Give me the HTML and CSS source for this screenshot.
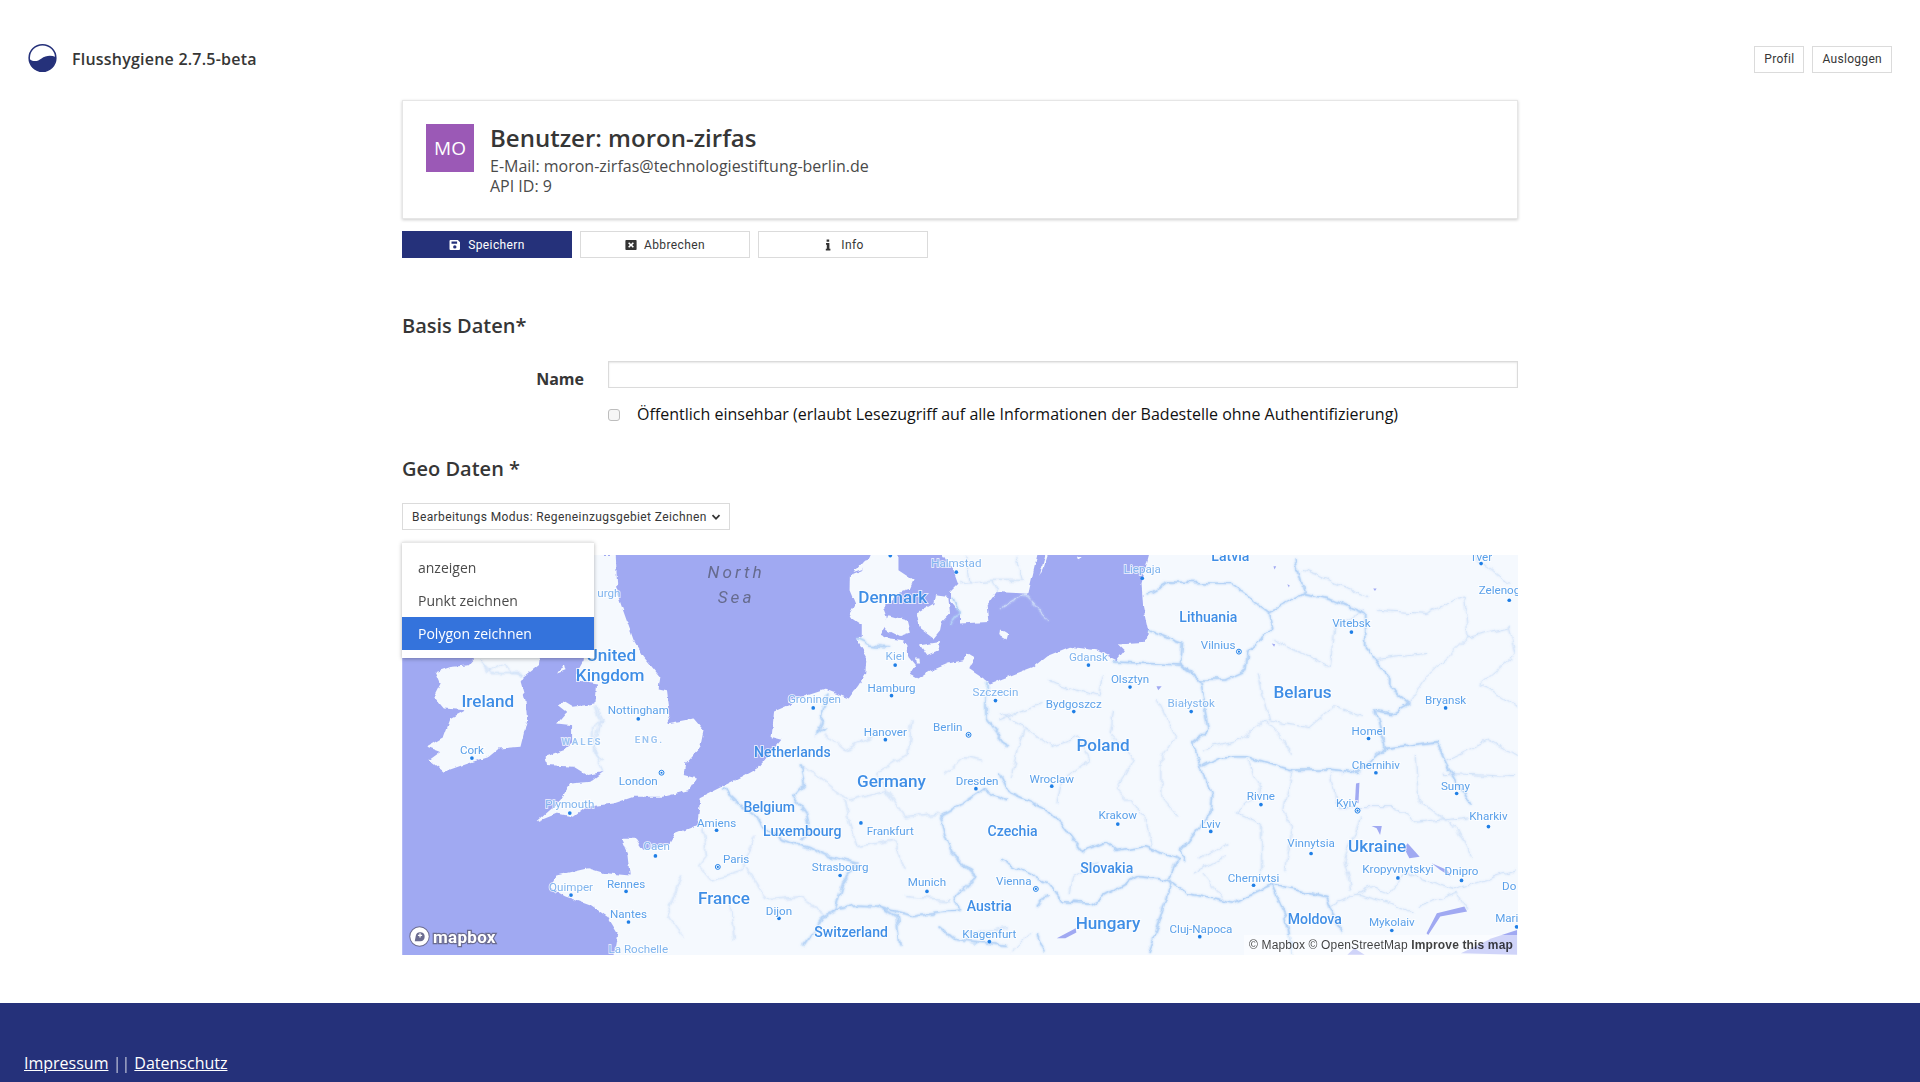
FILE: index.html
```html
<!DOCTYPE html>
<html lang="de">
<head>
	<meta charset="UTF-8">
	<title>Flusshygiene</title>
	<link rel="stylesheet" href="styles.css">
</head>
<body>
	<header class="top">
		<a class="brand" href="#">
			<svg class="brand-logo" viewBox="0 0 30 30">
				<circle cx="15" cy="15" r="13.8" fill="#fff" stroke="#25317a" stroke-width="1.6"/>
				<path d="M1.5 16 C6 19.5 10 18.5 14 15.5 C18 12.5 24 12 28.5 14 C29 22 23 29 15 29 C7 29 1.5 23 1.5 16 Z" fill="#25317a"/>
			</svg>
			<span>Flusshygiene 2.7.5-beta</span>
		</a>
		<nav class="top-nav">
			<a class="btn btn-small" href="#">Profil</a>
			<a class="btn btn-small" href="#">Ausloggen</a>
		</nav>
	</header>

	<main class="content">
		<section class="card">
			<div class="avatar">MO</div>
			<div class="card-text">
				<h1>Benutzer: moron-zirfas</h1>
				<p>E-Mail: moron-zirfas@technologiestiftung-berlin.de</p>
				<p>API ID: 9</p>
			</div>
		</section>

		<div class="actions">
			<a class="btn btn-wide btn-primary" href="#">
				<svg class="icon" viewBox="0 0 12 12"><path fill="currentColor" fill-rule="evenodd" d="M1.5 1h7.3L11 3.2v6.8a1 1 0 0 1-1 1H1.5a1 1 0 0 1-1-1V2a1 1 0 0 1 1-1zM2.5 2.4v2.4h5.6V2.4zM5.8 6.2a1.7 1.7 0 1 0 0 3.4 1.7 1.7 0 0 0 0-3.4z"/></svg>
				Speichern
			</a>
			<a class="btn btn-wide" href="#">
				<svg class="icon" viewBox="0 0 12 12"><path fill="#333" fill-rule="evenodd" d="M1.2 1h9.6a.8.8 0 0 1 .8.8v8.4a.8.8 0 0 1-.8.8H1.2a.8.8 0 0 1-.8-.8V1.800a.8.8 0 0 1 .8-.8zM4.200 3.200 3.100 4.300 4.800 6 3.100 7.700l1.100 1.100L6 7.100l1.800 1.700 1.100-1.100L7.200 6l1.700-1.700-1.100-1.100L6 4.900z"/></svg>
				Abbrechen
			</a>
			<a class="btn btn-wide" href="#">
				<svg class="icon" viewBox="0 0 12 12"><path fill="#333" d="M4.600 0.500h2.600v2.200H4.600zM4 4h3.400v5.700h1V11.500H3.800V9.700h1V5.700H4z"/></svg>
				Info
			</a>
		</div>

		<h2 class="section-title first">Basis Daten*</h2>
		<div class="form-row">
			<label class="form-label" for="name">Name</label>
			<input class="form-input" id="name" type="text">
		</div>
		<div class="check-row">
			<input class="check" id="public" type="checkbox">
			<label for="public">Öffentlich einsehbar (erlaubt Lesezugriff auf alle Informationen der Badestelle ohne Authentifizierung)</label>
		</div>

		<h2 class="section-title second">Geo Daten *</h2>

		<div class="geo">
			<div class="mode-select">
				Bearbeitungs Modus: Regeneinzugsgebiet Zeichnen
				<svg class="chevron" viewBox="0 0 10 10"><path d="M1.500 3.200 5 6.800 8.500 3.200" fill="none" stroke="#333" stroke-width="1.800"/></svg>
			</div>

			<ul class="mode-menu">
				<li>anzeigen</li>
				<li>Punkt zeichnen</li>
				<li class="active">Polygon zeichnen</li>
			</ul>

			<div class="map">
				<svg class="map-svg" viewBox="328 453 912 327">
					<defs>
						<filter id="rough" filterUnits="userSpaceOnUse" x="320" y="440" width="930" height="350">
							<feTurbulence type="fractalNoise" baseFrequency=".18" numOctaves="2" seed="4"/>
							<feDisplacementMap in="SourceGraphic" scale="3.500" xChannelSelector="R" yChannelSelector="G"/>
						</filter>
						<filter id="wiggle" filterUnits="userSpaceOnUse" x="320" y="440" width="930" height="350">
							<feTurbulence type="fractalNoise" baseFrequency=".09" numOctaves="3" seed="9" result="noise"/>
							<feDisplacementMap in="SourceGraphic" in2="noise" scale="7" xChannelSelector="R" yChannelSelector="G" result="line"/>
							<feGaussianBlur in="line" stdDeviation="1" result="glow"/>
							<feMerge>
								<feMergeNode in="glow"/>
								<feMergeNode in="line"/>
							</feMerge>
						</filter>
					</defs>

					<rect x="328" y="453" width="912" height="327" class="water"/>

					<!-- land -->
					<g filter="url(#rough)">
						<path class="land" d="M499 790 504 762 496 749 483 740 461 732 449 725 454 715 480 709 493 713 514 715 512 697 507 685 519 685 525 694 545 691 551 681 569 674 572 651 590 642 606 634 619 627 638 604 630 602 632 581 648 574 643 573 674 563 693 570.300 701 559.500 706.500 550 707.800 536 703.700 529.500 699 521.300 703.700 520 703.700 510.400 695.600 505 693.700 501 698.300 492.800 693.700 481.900 694 469.600 703.700 465.500 709 457.400 714.600 445 733.700 445 733.700 465.500 746 473.700 743 480.500 735 483 728 490 721.400 496.800 724 503.600 721.400 514.500 718.700 517.200 726.900 521.300 737.700 522.700 741 526.800 741.800 536.300 747.300 543.100 743 550 750 554 758 548.600 774.500 541.700 786.700 539 789.500 533.600 796.300 537.700 790.800 545.800 803 554 808.500 558 843.900 544.500 854.800 535.800 873.900 528.100 895.600 530.900 912 539 918.800 530.900 913.300 525.400 936.500 524 937.800 514.500 933.700 495.500 932.400 476.400 940.500 445 1250 445 1250 790Z"/>
						<g transform="matrix(.2722 0 0 .2722 669.700 449.200)">
							<path class="land" d="M345 -20 400 60 415 100 390 125 390 150 420 185 420 220 505 215 500 165 530 125 625 130 660 -20Z"/>
							<path class="land" d="M672 50 695 -20 685 -20 658 80Z"/>
							<path class="land" d="M205 195 260 210 270 250 240 260 200 240 188 225Z"/>
							<path class="land" d="M290 190 340 160 345 135 385 140 390 190 365 215 360 240 340 265 300 235Z"/>
							<path class="land" d="M300 285 360 275 355 300 320 315Z"/>
							<path class="land" d="M540 235 565 250 560 268 538 255Z"/>
							<path class="land" d="M770 20 785 20 775 33Z"/>
							<path class="land" d="M285 325 298 325 300 337 287 337Z"/>
							<path class="land" d="M100 65 130 30 160 20 145 50Z"/>
							<path class="land" d="M185 -20 230 -20 225 15 190 15Z"/>
						</g>
						<g transform="matrix(.2722 0 0 .2722 326.700 522.700)">
							<path class="land" d="M235 40 420 40 415 75 370 110 360 125 375 180 380 240 360 320 295 325 265 350 200 370 130 395 85 360 120 335 80 320 130 290 150 235 195 210 130 205 100 170 120 130 105 95 150 80 205 75Z"/>
							<path class="land" d="M470 100 490 70 495 90Z"/>
							<path class="land" d="M560 -256 646 -256 652 -135 700 0 730 50 780 110 775 145 800 150 810 230 800 250 880 235 910 270 900 320 855 370 850 405 890 415 870 450 790 470 700 470 640 490 560 500 520 530 470 520 409 545 460 500 480 480 510 430 570 425 610 395 560 405 520 380 440 375 435 350 490 330 515 310 515 255 470 250 500 215 475 195 495 185 520 200 585 190 590 130 530 120 530 95 550 60Z"/>
						</g>
					</g>

					<!-- lakes -->
					<g transform="matrix(.2812 0 0 .2722 816.700 441)">
						<path class="water" d="M1035 730 1045 728 1042 790 1032 785Z"/>
						<path class="water" d="M1185 910 1220 950 1190 955 1175 925Z"/>
						<path class="water" d="M1270 1120 1350 1100 1358 1115 1280 1130 1245 1185 1240 1180Z"/>
						<path class="water" d="M165 1195 220 1165 222 1178 190 1195Z"/>
						<path class="water" d="M1080 858 1110 858 1105 885 1095 865Z"/>
						<path class="water" d="M1255 970 1300 990 1310 1010 1280 990Z"/>
						<path class="water" d="M1340 1240 1430 1195 1503 1170 1503 1245Z"/>
						<path class="water" d="M1010 1245 1030 1225 1060 1245Z"/>
						<path class="water" d="M455 438 470 438 460 450Z"/>
						<path class="water" d="M790 310 800 312 797 320Z"/>
						<path class="water" d="M795 78 803 78 798 88Z"/>
						<path class="water" d="M835 132 842 135 840 142Z"/>
						<path class="water" d="M1085 145 1095 145 1090 152Z"/>
					</g>

					<!-- borders -->
					<g filter="url(#wiggle)">
						<g class="borders" transform="matrix(.2812 0 0 .2722 816.700 441)">
							<path class="line-thin" d="M70 560 150 620 230 590 260 660 180 720 165 790M330 510 320 580 390 660 340 750 420 830 440 920M460 480 510 590 470 650 470 770 520 830M590 630 700 600 770 540 830 600 850 650M750 400 780 540 900 560 970 500 1060 530M960 380 970 260 1060 210M720 660 760 750 690 820 760 850 760 1000M850 690 825 800 850 860 830 990M960 700 980 800 1150 800 1210 850 1370 830M1050 830 1000 960 1020 1050M1300 660 1420 600 1500 650M1210 650 1220 780 1330 870 1370 950M1090 210 1240 220 1350 170 1360 290 1240 410 1190 490M1360 290 1480 260 1500 340 1400 430 1500 500M1080 360 1240 340M1290 700 1500 710M1130 1060 1180 1000 1320 1050 1500 990M1030 1060 1130 1090 1200 1120M560 1000 650 950M200 1060 210 1010 280 970M30 720 70 560 0 520M140 240 70 160 0 200M140 420 290 470 300 400M120 490 0 540M590 1000 660 1090M660 910 580 960M960 1100 1080 1040 1130 1060M1220 1100 1330 1060 1360 1110M90 1180 30 1240M1370 40 1480 130M880 90 1070 170M800 300 960 380"/>
							<path class="line-bold" d="M420 165 490 125 670 130 780 215 885 160 970 180 1060 220 1060 320 1130 410 1130 440 1190 490 1140 520 1090 510 1120 625 1270 605 1300 670 1370 800M780 215 790 265 720 330 715 390 650 420 580 420 525 370 530 310 430 270M330 365 525 375 580 420 605 565 555 610 585 680 615 770 610 820 525 930 540 960M585 680 640 650 720 650 850 690 950 690 1040 700 1120 625M525 960 420 920 340 935 310 905 240 935 180 850 140 810 100 790 25 755 0 700M490 1020 540 1060 680 1090 790 1035 950 1070 990 1180M790 1035 830 1130 850 1240M500 1020 430 1240M140 1030 180 1085 265 1090 400 1010 490 1020 520 960M140 1030 0 960M885 160 860 60M110 1100 140 1060M105 1180 130 1240"/>
						</g>
						<g class="borders" transform="matrix(.3229 0 0 .2722 318.500 522.700)">
							<path class="line-thin" d="M225 60 260 100 330 100M515 200 530 240 515 330 540 390M1100 280 1150 330 1220 290M1040 370 1160 480 1260 450 1300 530 1390 520M1320 240 1310 340 1230 400 1270 480M1400 400 1450 350 1500 360M1150 480 1180 620 1280 600 1300 690M790 560 800 650 780 680 810 720 890 690 920 590M740 700 700 830 740 890M900 680 950 780 1040 770 1100 820M860 800 870 900M1300 770 1420 780M1460 880 1560 860"/>
							<path class="line-bold" d="M840 445 880 490 930 530 950 570 990 600 1060 625 1110 650 1180 670 1145 730 1125 810 1095 830 1045 920M1040 370 1050 430 1020 470 1050 520 1060 570 1040 600M1100 260 1080 280 1110 160M1390 530 1420 640 1480 710 1430 770 1440 810 1320 830 1240 800 1180 795 1125 810M1390 530 1450 490 1500 450 1560 480M1510 130 1510 240 1560 320M1240 800 1280 830 1290 920M1390 860 1430 900 1560 920"/>
						</g>
						<g class="borders" transform="matrix(.2722 0 0 .2722 669.700 449.200)">
							<path class="line-thin" d="M420 100 515 90 530 125M515 90 610 90 590 20M450 100 440 20"/>
							<path class="line-bold" d="M108 265 150 285 210 290"/>
							<path class="line-bold" d="M395 140 415 185 390 225"/>
						</g>
						<g class="borders" transform="matrix(.2722 0 0 .2722 326.700 522.700)">
							<path class="line-thin" d="M585 195 605 240 580 260 580 340 610 360"/>
							<path class="line-thin" d="M235 55 265 95 315 70 340 100 365 105"/>
						</g>
					</g>

					<!-- places -->
					<g class="dots">
						<circle cx="781" cy="467" r="1.500"/><circle cx="727" cy="453.500" r="1.500"/><circle cx="731" cy="543" r="1.500"/><circle cx="728" cy="568" r="1.500"/><circle cx="664" cy="578" r="1.500"/><circle cx="723" cy="604" r="1.500"/><circle cx="813" cy="572" r="1.500"/><circle cx="889" cy="543" r="1.500"/><circle cx="923" cy="561" r="1.500"/><circle cx="877" cy="581" r="1.500"/><circle cx="973" cy="581" r="1.500"/><circle cx="933" cy="472" r="1.500"/><circle cx="1104" cy="516" r="1.500"/><circle cx="1233" cy="490" r="1.500"/><circle cx="1210" cy="460" r="1.500"/><circle cx="1181" cy="578" r="1.500"/><circle cx="1118" cy="603" r="1.500"/><circle cx="1124" cy="631" r="1.500"/><circle cx="1190" cy="648" r="1.500"/><circle cx="1216" cy="675" r="1.500"/><circle cx="1030" cy="657" r="1.500"/><circle cx="989" cy="679" r="1.500"/><circle cx="913" cy="673" r="1.500"/><circle cx="859" cy="642" r="1.500"/><circle cx="797" cy="644" r="1.500"/><circle cx="521" cy="587" r="1.500"/><circle cx="385" cy="619" r="1.500"/><circle cx="465" cy="664" r="1.500"/><circle cx="585" cy="678" r="1.500"/><circle cx="535" cy="699" r="1.500"/><circle cx="703" cy="672" r="1.500"/><circle cx="686" cy="715" r="1.500"/><circle cx="757" cy="728" r="1.500"/><circle cx="511" cy="728" r="1.500"/><circle cx="466" cy="731" r="1.500"/><circle cx="513" cy="753" r="1.500"/><circle cx="636" cy="750" r="1.500"/><circle cx="808" cy="769" r="1.500"/><circle cx="1071" cy="697" r="1.500"/><circle cx="1142" cy="717" r="1.500"/><circle cx="1194" cy="719" r="1.500"/><circle cx="1024" cy="723" r="1.500"/><circle cx="980" cy="765" r="1.500"/><circle cx="1137" cy="760" r="1.500"/><circle cx="1239" cy="757" r="1.500"/>
					</g>
					<g class="capitals">
						<circle cx="791" cy="600" r="2"/><circle cx="1012" cy="532" r="2"/><circle cx="1109" cy="662" r="2"/><circle cx="540" cy="631" r="2"/><circle cx="586" cy="708" r="2"/><circle cx="846" cy="726" r="2"/>
					</g>
					<g class="capital-dots">
						<circle cx="791" cy="600" r=".9"/><circle cx="1012" cy="532" r=".9"/><circle cx="1109" cy="662" r=".9"/><circle cx="540" cy="631" r=".9"/><circle cx="586" cy="708" r=".9"/><circle cx="846" cy="726" r=".9"/>
					</g>

					<g class="sea-labels">
						<text x="601" y="472">North</text>
						<text x="601" y="492">Sea</text>
					</g>
					<g class="faint-labels">
						<text x="781" y="463">Halmstad</text><text x="933" y="468">Liepaja</text><text x="889" y="540">Gdansk</text><text x="665" y="574">Groningen</text><text x="731" y="539">Kiel</text><text x="521" y="778">La Rochelle</text><text x="466" y="728">Quimper</text><text x="465" y="660">Plymouth</text><text x="536" y="694">Caen</text><text x="813" y="568">Szczecin</text><text x="973" y="577">Białystok</text><text x="497" y="487">urgh</text>
						<text class="spaced" x="475" y="608">WALES</text><text class="spaced" x="530" y="607">ENG.</text>
					</g>
					<g class="city-labels">
						<text x="995" y="530">Vilnius</text><text x="1104" y="512">Vitebsk</text><text x="1225" y="485">Zelenog</text><text x="1210" y="458">Tver</text><text x="923" y="558">Olsztyn</text><text x="877" y="578">Bydgoszcz</text><text x="1181" y="575">Bryansk</text><text x="1118" y="600">Homel</text><text x="1124" y="628">Chernihiv</text><text x="1030" y="653">Rivne</text><text x="1189" y="645">Sumy</text><text x="1100" y="659">Kyiv</text><text x="1216" y="670">Kharkiv</text><text x="859" y="639">Wroclaw</text><text x="798" y="641">Dresden</text><text x="728" y="565">Hamburg</text><text x="723" y="601">Hanover</text><text x="774" y="597">Berlin</text><text x="521" y="583">Nottingham</text><text x="385" y="616">Cork</text><text x="521" y="641">London</text><text x="585" y="675">Amiens</text><text x="727" y="682">Frankfurt</text><text x="601" y="705">Paris</text><text x="913" y="669">Krakow</text><text x="989" y="676">Lviv</text><text x="686" y="711">Strasbourg</text><text x="1071" y="692">Vinnytsia</text><text x="1142" y="713">Kropyvnytskyi</text><text x="1194" y="715">Dnipro</text><text x="1233" y="727">Do</text><text x="511" y="725">Rennes</text><text x="757" y="724">Munich</text><text x="828" y="723">Vienna</text><text x="1024" y="720">Chernivtsi</text><text x="513" y="750">Nantes</text><text x="636" y="747">Dijon</text><text x="808" y="766">Klagenfurt</text><text x="981" y="762">Cluj-Napoca</text><text x="1137" y="756">Mykolaiv</text><text x="1231" y="753">Mari</text>
					</g>
					<g class="country-labels">
						<text x="987" y="508">Lithuania</text><text x="1005" y="458">Latvia</text><text x="647" y="618">Netherlands</text><text x="628" y="663">Belgium</text><text x="655" y="683">Luxembourg</text><text x="827" y="683">Czechia</text><text x="904" y="713">Slovakia</text><text x="808" y="744">Austria</text><text x="695" y="765">Switzerland</text><text x="1074" y="755">Moldova</text>
					</g>
					<g class="big-labels">
						<text x="729" y="492">Denmark</text><text x="1064" y="570">Belarus</text><text x="901" y="613">Poland</text><text x="728" y="643">Germany</text><text x="499" y="540">United</text><text x="498" y="556">Kingdom</text><text x="398" y="577">Ireland</text><text x="1125" y="696">Ukraine</text><text x="591" y="738">France</text><text x="905" y="759">Hungary</text>
					</g>
				</svg>

				<div class="map-logo">
					<svg viewBox="0 0 20 20"><circle cx="10" cy="10" r="8.800" fill="#fff" stroke="#6b6c90" stroke-width="1.800"/><path d="M5.500 14.500 6.500 9a4.300 4.300 0 1 1 4.300 5.500z" fill="#6b6c90"/><path d="M10.500 7v4M8.500 9h4" stroke="#fff" stroke-width="1.200"/></svg>
					<span>mapbox</span>
				</div>
				<div class="map-credit">© Mapbox © OpenStreetMap <b>Improve this map</b></div>
			</div>
		</div>
	</main>

	<footer class="foot">
		<a href="#">Impressum</a> <span class="sep">||</span> <a href="#">Datenschutz</a>
	</footer>
</body>
</html>
```

FILE: styles.css
```css
* {
	margin: 0;
	padding: 0;
	box-sizing: border-box;
}

body {
	font-family: "Open Sans", "Liberation Sans", sans-serif;
	font-size: 16px;
	color: #363636;
	background: #fff;
}

.top {
	display: flex;
	justify-content: space-between;
	align-items: center;
	height: 100px;
	padding: 18px 28px 0 28px;
}

.brand {
	display: flex;
	align-items: center;
	gap: 15px;
	font-size: 16px;
	font-weight: 600;
	letter-spacing: .22px;
	color: #363636;
	text-decoration: none;
}

.brand-logo {
	width: 29px;
	height: 30px;
	margin-top: -2px;
}

.top-nav {
	display: flex;
	gap: 8px;
}

.btn {
	display: flex;
	align-items: center;
	justify-content: center;
	height: 27px;
	font-family: Roboto, "Liberation Sans", sans-serif;
	font-size: 12px;
	letter-spacing: .4px;
	color: #363636;
	background: #fff;
	border: 1px solid #dbdbdb;
	text-decoration: none;
}

.btn-small {
	padding: 0 9px;
	letter-spacing: .3px;
}

.btn-wide {
	width: 170px;
	gap: 7px;
}

.btn-primary {
	color: #fff;
	background: #25317a;
	border-color: #25317a;
}

.icon {
	width: 12px;
	height: 12px;
}

.content {
	width: 1116px;
	margin: 0 auto;
}

.card {
	display: flex;
	gap: 16px;
	height: 119px;
	padding: 23px 23px;
	border: 1px solid #e6e6e6;
	box-shadow: 0 1px 3px rgba(0, 0, 0, .2);
}

.avatar {
	display: flex;
	align-items: center;
	justify-content: center;
	width: 48px;
	height: 48px;
	font-size: 19px;
	color: #fff;
	background: #9b59b6;
}

.card-text {
	margin-top: -1px;
	color: #4a4a4a;
}

.card-text h1 {
	font-size: 24px;
	font-weight: 600;
	line-height: 30px;
	margin-bottom: 3px;
	color: #363636;
}

.card-text p {
	line-height: 20px;
}

.actions {
	display: flex;
	gap: 8px;
	margin-top: 12px;
}

.section-title {
	font-size: 20px;
	font-weight: 600;
	line-height: 26px;
}

.first {
	margin-top: 55px;
}

.second {
	margin-top: 30px;
}

.form-row {
	display: grid;
	grid-template-columns: 182px 1fr;
	column-gap: 24px;
	margin-top: 22px;
}

.form-label {
	padding-top: 6px;
	font-weight: 700;
	text-align: right;
	line-height: 24px;
}

.form-input {
	height: 27px;
	border: 1px solid #dbdbdb;
	box-shadow: inset 0 1px 2px rgba(0, 0, 0, .1);
}

.check-row {
	display: flex;
	align-items: center;
	gap: 17px;
	height: 24px;
	margin-top: 11px;
	margin-left: 206px;
	color: #111;
}

.check {
	appearance: none;
	width: 12px;
	height: 12px;
	margin-top: 2px;
	background: #f6f6f6;
	border: 1px solid #bdbdbd;
	border-radius: 3px;
}

.geo {
	position: relative;
	margin-top: 21px;
}

.mode-select {
	display: flex;
	align-items: center;
	justify-content: space-between;
	width: 328px;
	height: 27px;
	padding: 0 8px 0 9px;
	font-family: Roboto, "Liberation Sans", sans-serif;
	font-size: 12px;
	letter-spacing: .4px;
	border: 1px solid #dbdbdb;
}

.chevron {
	width: 10px;
	height: 10px;
}

.mode-menu {
	position: absolute;
	z-index: 3;
	top: 39px;
	left: 0;
	width: 192px;
	padding: 8px 0;
	list-style: none;
	font-size: 14px;
	background: #fff;
	border-top: 1px solid #e8e8e8;
	box-shadow: 0 1px 4px rgba(0, 0, 0, .3);
}

.mode-menu li {
	height: 33px;
	padding: 0 16px;
	line-height: 33px;
	color: #4a4a4a;
}

.mode-menu .active {
	color: #fff;
	background: #3473dc;
}

.map {
	position: relative;
	height: 400px;
	margin-top: 25px;
	overflow: hidden;
}

.map-svg {
	display: block;
	width: 100%;
	height: 100%;
}

.water {
	fill: #a0a9f2;
}

.land {
	fill: #f5f9fe;
}

.borders path {
	fill: none;
	vector-effect: non-scaling-stroke;
}

.line-thin {
	stroke: #d3e3f8;
	stroke-width: 1;
}

.line-bold {
	stroke: #b4d2f6;
	stroke-width: 1.500;
}

.dots circle,
.capital-dots circle {
	fill: #1f7fe6;
}

.capitals circle {
	fill: #fff;
	stroke: #1f7fe6;
	stroke-width: .8;
}

.map-svg text {
	font-family: Roboto, "Liberation Sans", sans-serif;
	text-anchor: middle;
	paint-order: stroke;
	stroke: rgba(255, 255, 255, .7);
	stroke-width: 1.500;
}

.sea-labels text {
	font-size: 14px;
	font-style: italic;
	letter-spacing: 2.500px;
	fill: #666b8e;
	stroke: none;
}

.faint-labels text {
	font-size: 9.500px;
	fill: #7fb4ee;
}

.faint-labels .spaced {
	font-weight: 700;
	font-size: 8px;
	letter-spacing: 1.500px;
	fill: #9cc5f2;
}

.city-labels text {
	font-size: 9.500px;
	fill: #5aa0ea;
}

.country-labels text {
	font-size: 11.500px;
	font-weight: 500;
	fill: #3f8ee6;
}

.big-labels text {
	font-size: 14px;
	font-weight: 500;
	fill: #3f8ee6;
}

.map-logo {
	position: absolute;
	left: 7px;
	bottom: 8px;
	display: flex;
	align-items: center;
	gap: 3px;
	font-family: Roboto, "Liberation Sans", sans-serif;
	font-size: 17px;
	font-weight: 700;
	line-height: 20px;
	letter-spacing: .3px;
	color: #fff;
	-webkit-text-stroke: 2.5px #6b6c90;
	paint-order: stroke fill;
}

.map-logo svg {
	width: 21px;
	height: 21px;
}

.map-credit {
	position: absolute;
	right: 0;
	bottom: 0;
	padding: 2px 5px;
	font-family: "Liberation Sans", sans-serif;
	font-size: 12px;
	line-height: 16px;
	letter-spacing: .15px;
	color: rgba(0, 0, 0, .75);
	background: rgba(255, 255, 255, .5);
}

.foot {
	margin-top: 48px;
	height: 79px;
	padding: 49px 24px 0;
	line-height: 22px;
	color: #fff;
	background: #25317a;
}

.foot a {
	color: #fff;
}

.sep {
	opacity: .7;
}
```
